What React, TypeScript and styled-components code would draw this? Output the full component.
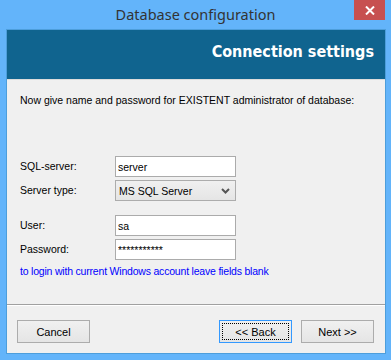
import React from 'react';
import styled, { createGlobalStyle } from 'styled-components';

const GlobalStyle = createGlobalStyle`
  html, body {
    margin: 0;
    padding: 0;
    background: #63b4fa;
  }
  * {
    box-sizing: border-box;
  }
`;

const Window = styled.div`
  width: 391px;
  height: 360px;
  background: #63b4fa;
  display: flex;
  flex-direction: column;
  font-family: 'Liberation Sans', Arial, sans-serif;
  font-size: 10.5px;
  color: #000;
`;

const TitleBar = styled.div`
  position: relative;
  height: 29px;
  display: flex;
  align-items: center;
  justify-content: center;
  padding-bottom: 2px;
`;

const Title = styled.span`
  font-family: 'Noto Sans', 'Open Sans', sans-serif;
  font-size: 14.5px;
  color: #333;
`;

const CloseButton = styled.div`
  position: absolute;
  top: 0;
  right: 6px;
  width: 31px;
  height: 20px;
  background: #c75050;
  display: flex;
  align-items: center;
  justify-content: center;
`;

const Client = styled.div`
  margin: 0 5px 6px 6px;
  flex: 1;
  border: 1px solid #4d9edb;
  background: #f0f0f0;
  display: flex;
  flex-direction: column;
`;

const Header = styled.div`
  height: 50px;
  background: #10648f;
  border-bottom: 1px solid #dcdcdc;
  display: flex;
  justify-content: flex-end;
  padding: 12px 11px 0 0;
`;

const HeaderTitle = styled.h1`
  margin: 0;
  font-family: 'DejaVu Sans Condensed', 'DejaVu Sans', sans-serif;
  font-weight: bold;
  font-size: 16px;
  color: #fff;
  line-height: 19px;
`;

const Body = styled.div`
  flex: 1;
  padding: 14px 13px 0 13px;
  display: flex;
  flex-direction: column;
`;

const Intro = styled.p`
  margin: 0;
  line-height: 13px;
`;

const Form = styled.div<{ $top: number }>`
  display: grid;
  grid-template-columns: 95px 121px;
  row-gap: 3px;
  align-items: center;
  margin-top: ${p => p.$top}px;
`;

const Label = styled.label`
  line-height: 13px;
`;

const TextField = styled.input`
  height: 21px;
  width: 121px;
  border: 1px solid #ababab;
  background: #fff;
  padding: 0 2px;
  margin: 0;
  font-family: 'Liberation Sans', Arial, sans-serif;
  font-size: 10.5px;
  color: #000;
  outline: none;
`;

const Select = styled.div`
  height: 21px;
  width: 121px;
  border: 1px solid #acacac;
  background: linear-gradient(#f0f0f0, #e5e5e5);
  display: flex;
  align-items: center;
  justify-content: space-between;
  padding: 0 5px 0 3px;
`;

const Hint = styled.div`
  margin-top: 5px;
  color: #0000ff;
  line-height: 13px;
  letter-spacing: -0.2px;
`;

const Footer = styled.div`
  border-top: 1px solid #a0a0a0;
  box-shadow: inset 0 1px 0 #fff;
  height: 49px;
  display: flex;
  align-items: flex-start;
  padding: 15px 11px 0 10px;
`;

const Button = styled.button<{ $focused?: boolean }>`
  width: 73px;
  height: 23px;
  margin: 0;
  padding: 0;
  border: 1px solid ${p => (p.$focused ? '#3399ff' : '#acacac')};
  background: linear-gradient(#f0f0f0, #e5e5e5);
  font-family: 'Liberation Sans', Arial, sans-serif;
  font-size: 11px;
  color: #000;
  position: relative;
  &::after {
    content: '';
    display: ${p => (p.$focused ? 'block' : 'none')};
    position: absolute;
    inset: 2px;
    border: 1px dotted #000;
  }
`;

const Spacer = styled.div`
  flex: 1;
`;

const ButtonGap = styled.div`
  width: 9px;
`;

const Chevron = () => (
  <svg width="9" height="6" viewBox="0 0 9 6">
    <polyline points="1,1 4.5,4.5 8,1" fill="none" stroke="#555" strokeWidth="2" />
  </svg>
);

const CloseIcon = () => (
  <svg width="10" height="9" viewBox="0 0 10 9">
    <path d="M1 0.5 L9 8.5 M9 0.5 L1 8.5" stroke="#fff" strokeWidth="2" />
  </svg>
);

export default function App() {
  return (
    <>
      <GlobalStyle />
      <Window>
        <TitleBar>
          <Title>Database configuration</Title>
          <CloseButton>
            <CloseIcon />
          </CloseButton>
        </TitleBar>
        <Client>
          <Header>
            <HeaderTitle>Connection settings</HeaderTitle>
          </Header>
          <Body>
            <Intro>Now give name and password for EXISTENT administrator of database:</Intro>
            <Form $top={49}>
              <Label>SQL-server:</Label>
              <TextField readOnly value="server" />
              <Label>Server type:</Label>
              <Select>
                <span>MS SQL Server</span>
                <Chevron />
              </Select>
            </Form>
            <Form $top={14}>
              <Label>User:</Label>
              <TextField readOnly value="sa" />
              <Label>Password:</Label>
              <TextField readOnly value="***********" />
            </Form>
            <Hint>to login with current Windows account leave fields blank</Hint>
          </Body>
          <Footer>
            <Button>Cancel</Button>
            <Spacer />
            <Button $focused>&lt;&lt; Back</Button>
            <ButtonGap />
            <Button>Next &gt;&gt;</Button>
          </Footer>
        </Client>
      </Window>
    </>
  );
}
